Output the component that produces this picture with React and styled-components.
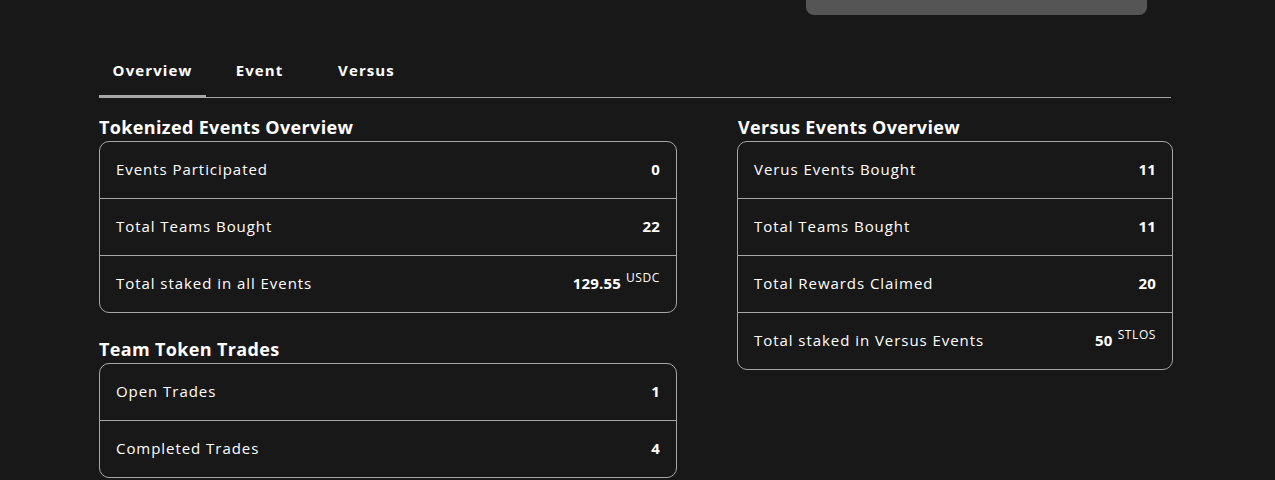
import React, { useState } from 'react';
import styled, { createGlobalStyle } from 'styled-components';

const GlobalStyle = createGlobalStyle`
  html, body {
    margin: 0;
    padding: 0;
    background: #181818;
  }
  body {
    font-family: 'Open Sans', 'Noto Sans', sans-serif;
    color: #ffffff;
  }
  * {
    box-sizing: border-box;
  }
`;

const Page = styled.div`
  width: 1275px;
  min-height: 480px;
  background: #181818;
`;

const TopBar = styled.div`
  display: flex;
  justify-content: flex-end;
  padding-right: 128px;
`;

const SearchStub = styled.div`
  width: 341px;
  height: 15px;
  background: #555555;
  border-radius: 0 0 8px 8px;
`;

const Container = styled.main`
  width: 1072px;
  margin: 33px 0 0 99px;
`;

const TabList = styled.nav`
  display: flex;
  border-bottom: 1px solid #a6a6a6;
`;

const Tab = styled.button`
  width: 107px;
  padding: 12px 0 15px;
  border: none;
  border-bottom: 2px solid ${({ $active }) => ($active ? '#a6a6a6' : 'transparent')};
  background: none;
  color: #ffffff;
  font-family: inherit;
  font-size: 15px;
  font-weight: 700;
  line-height: 20px;
  letter-spacing: 1.1px;
  text-align: center;
  cursor: pointer;
`;

const Columns = styled.div`
  display: grid;
  grid-template-columns: 578px 436px;
  column-gap: 60px;
  padding-top: 18px;
`;

const Column = styled.div`
  display: flex;
  flex-direction: column;
  gap: 25px;
`;

const Section = styled.section`
  display: flex;
  flex-direction: column;
  gap: 3px;
`;

const Heading = styled.h2`
  margin: 0;
  padding-left: ${({ $inset }) => ($inset ? '1px' : '0')};
  font-size: 18px;
  font-weight: 700;
  line-height: 22px;
  letter-spacing: 0.35px;
`;

const Card = styled.div`
  border: 1px solid #a6a6a6;
  border-radius: 10px;
  overflow: hidden;
`;

const Row = styled.div`
  display: flex;
  align-items: center;
  justify-content: space-between;
  height: 57px;
  padding: 0 16px 2px;
  border-top: 1px solid #a6a6a6;

  &:first-child {
    height: 56px;
    border-top: none;
  }
`;

const Label = styled.span`
  font-size: 15px;
  font-weight: 500;
  letter-spacing: 0.95px;
`;

const Value = styled.span`
  display: flex;
  align-items: flex-start;
  gap: 5px;
  font-size: 15px;
  font-weight: 700;
  line-height: 20px;
  letter-spacing: 0.2px;
`;

const Unit = styled.span`
  margin-top: -2px;
  font-size: 12px;
  font-weight: 500;
  line-height: 14px;
  letter-spacing: 0.6px;
`;

const StatCard = ({ rows }) => (
  <Card>
    {rows.map(({ label, value, unit }) => (
      <Row key={label}>
        <Label>{label}</Label>
        <Value>
          {value}
          {unit && <Unit>{unit}</Unit>}
        </Value>
      </Row>
    ))}
  </Card>
);

const tokenized = [
  { label: 'Events Participated', value: '0' },
  { label: 'Total Teams Bought', value: '22' },
  { label: 'Total staked in all Events', value: '129.55', unit: 'USDC' },
];

const trades = [
  { label: 'Open Trades', value: '1' },
  { label: 'Completed Trades', value: '4' },
];

const versus = [
  { label: 'Verus Events Bought', value: '11' },
  { label: 'Total Teams Bought', value: '11' },
  { label: 'Total Rewards Claimed', value: '20' },
  { label: 'Total staked in Versus Events', value: '50', unit: 'STLOS' },
];

const tabs = ['Overview', 'Event', 'Versus'];

export default function App() {
  const [tab, setTab] = useState('Overview');

  return (
    <Page>
      <GlobalStyle />
      <TopBar>
        <SearchStub />
      </TopBar>
      <Container>
        <TabList>
          {tabs.map((name) => (
            <Tab key={name} $active={tab === name} onClick={() => setTab(name)}>
              {name}
            </Tab>
          ))}
        </TabList>
        <Columns>
          <Column>
            <Section>
              <Heading>Tokenized Events Overview</Heading>
              <StatCard rows={tokenized} />
            </Section>
            <Section>
              <Heading>Team Token Trades</Heading>
              <StatCard rows={trades} />
            </Section>
          </Column>
          <Column>
            <Section>
              <Heading $inset>Versus Events Overview</Heading>
              <StatCard rows={versus} />
            </Section>
          </Column>
        </Columns>
      </Container>
    </Page>
  );
}
